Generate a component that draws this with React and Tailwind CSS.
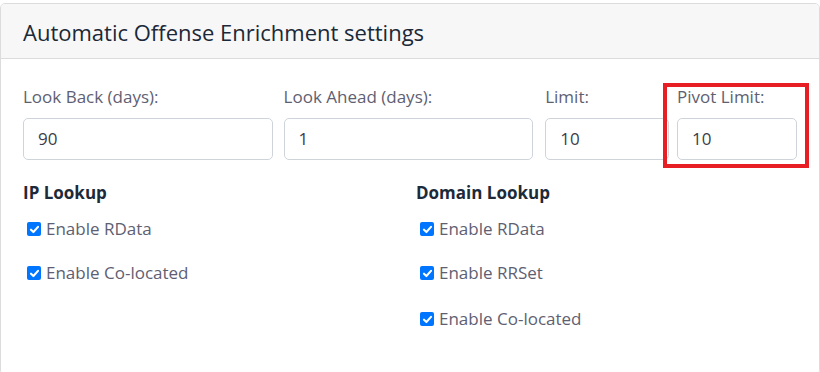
import React from "react";

const font = { fontFamily: '"Open Sans", "Noto Sans", sans-serif' };

function Check({ label, className = "" }) {
  return (
    <div className={`flex items-center h-[20px] ${className}`}>
      <span className="ml-[4px] w-[14px] h-[14px] rounded-[2px] bg-[#0075ff] flex items-center justify-center">
        <svg width="11" height="11" viewBox="0 0 10 10">
          <path d="M1.8 5.2 L4 7.3 L8.2 2.6" fill="none" stroke="white" strokeWidth="1.9" strokeLinecap="round" strokeLinejoin="round" />
        </svg>
      </span>
      <span className="ml-[5px] text-[17px] text-[#5e6072] leading-[20px]">{label}</span>
    </div>
  );
}

function Field({ label, value, w }) {
  return (
    <div className={`flex flex-col ${w}`}>
      <label className="text-[17px] text-[#5e6072] leading-[20px] h-[20px] whitespace-nowrap">{label}</label>
      <div className="mt-[11px] h-[42px] border border-[#ced4da] rounded-[5px] flex items-center px-[14px] text-[17px] text-[#3b3d4a]">
        {value}
      </div>
    </div>
  );
}

export default function App() {
  return (
    <div className="w-[820px] h-[372px] bg-white overflow-hidden pt-[3px]" style={font}>
      <div className="w-[820px] h-[372px] border border-[#dcdcdc] rounded-[5px] overflow-hidden">
        <div className="h-[55px] bg-[#f7f7f7] border-b border-[#dcdcdc] flex items-center px-[22px] pt-[2px]">
          <h2 className="text-[22px] text-[#1a2838] leading-none whitespace-nowrap">Automatic Offense Enrichment settings</h2>
        </div>
        <div className="px-[22px] pt-[28px]">
          <div className="flex">
            <Field label="Look Back (days):" value="90" w="w-[250px]" />
            <div className="w-[11px]" />
            <Field label="Look Ahead (days):" value="1" w="w-[250px]" />
            <div className="w-[12px]" />
            <Field label="Limit:" value="10" w="w-[124px]" />
            <div className="relative ml-[8px] w-[120px]">
              <Field label="Pivot Limit:" value="10" w="w-[120px]" />
              <div className="absolute left-[-14px] top-[-4px] w-[146px] h-[85px] border-[4px] border-[#e81e25]" />
            </div>
          </div>
          <div className="flex mt-[23px]">
            <div className="w-[393px]">
              <div className="text-[17px] font-bold text-[#1c2a3a] leading-[20px] h-[20px]">IP Lookup</div>
              <Check label="Enable RData" className="mt-[16px]" />
              <Check label="Enable Co-located" className="mt-[24px]" />
            </div>
            <div>
              <div className="text-[17px] font-bold text-[#1c2a3a] leading-[20px] h-[20px]">Domain Lookup</div>
              <Check label="Enable RData" className="mt-[16px]" />
              <Check label="Enable RRSet" className="mt-[24px]" />
              <Check label="Enable Co-located" className="mt-[26px]" />
            </div>
          </div>
        </div>
      </div>
    </div>
  );
}
